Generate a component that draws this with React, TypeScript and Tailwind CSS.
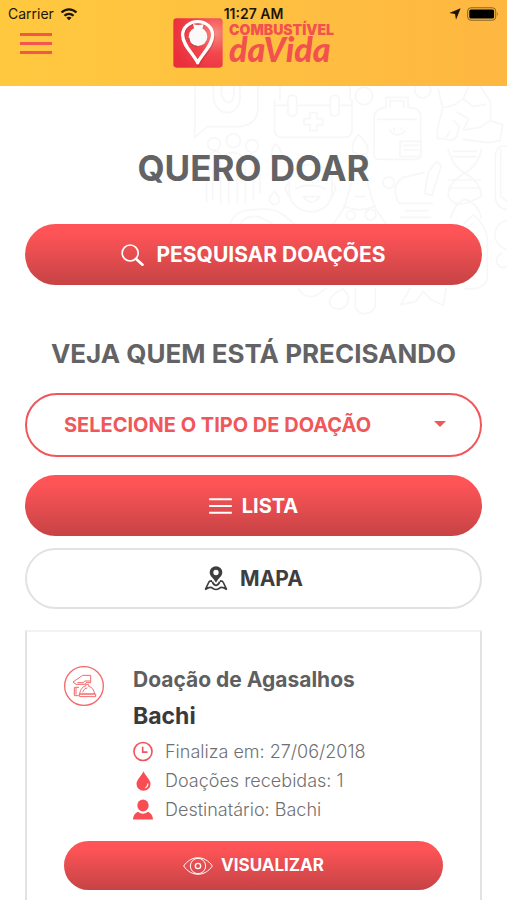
// App.tsx
import type { ReactNode } from 'react';

// ─── Dados ──────
const DONATION_TYPES = ['Agasalhos', 'Alimentos', 'Sangue'];

const DONATION = {
  title: 'Doação de Agasalhos',
  name: 'Bachi',
  endsOn: '27/06/2018',
  received: 1,
  recipient: 'Bachi',
};

// ─── Ícones ──────
const WifiIcon = () => (
  <svg viewBox="0 0 54 40" className="w-[18px] h-[13px]" aria-hidden="true">
    <g fill="none" stroke="#1c1608" strokeWidth="7">
      <path d="M4 14C17 1 37 1 50 14" />
      <path d="M13 24C21 16 33 16 41 24" />
    </g>
    <path d="M19 30C24 26 30 26 35 30L27 38Z" fill="#1c1608" />
  </svg>
);

const LocationIcon = () => (
  <svg viewBox="0 0 36 36" className="w-3 h-3" aria-hidden="true">
    <path d="M35 1L21 35L18 18L1 15Z" fill="#1c1608" />
  </svg>
);

const BatteryIcon = () => (
  <svg viewBox="0 0 98 42" className="w-8 h-[14px]" aria-hidden="true">
    <rect x="2" y="2" width="86" height="38" rx="10" fill="none" stroke="#7d6129" strokeWidth="3" />
    <rect x="7" y="7" width="76" height="28" rx="5" fill="#000" />
    <path d="M92 15Q97 21 92 27Z" fill="#7d6129" />
  </svg>
);

const LogoMark = () => (
  <svg viewBox="0 0 150 150" className="w-[50px] h-[50px]" aria-hidden="true">
    <defs>
      <radialGradient id="mark" cx="0.85" cy="0.3" r="0.9">
        <stop offset="0" stopColor="#f98a80" />
        <stop offset="0.45" stopColor="#f2474d" />
        <stop offset="1" stopColor="#ea2f3c" />
      </radialGradient>
    </defs>
    <rect x="1" y="1" width="148" height="148" rx="10" fill="url(#mark)" />
    <path d="M76 140C62 110 31 84 31 54A45 41 0 0 1 121 54C121 84 90 110 76 140Z" fill="none" stroke="#a92731" strokeWidth="10" opacity="0.4" />
    <path d="M74 134C60 106 29 82 29 51A45 40 0 0 1 119 51C119 82 88 106 74 134Z" fill="none" stroke="#fff" strokeWidth="10" strokeLinejoin="round" />
    <path d="M60 18C72 22 80 22 92 18L88 34H64Z" fill="#fff" />
    <circle cx="75" cy="56" r="28" fill="#fafafa" />
    <path d="M48 60C48 74 58 84 72 86" fill="none" stroke="#8f5155" strokeWidth="3" strokeDasharray="12 4" />
  </svg>
);

const SearchIcon = () => (
  <svg viewBox="0 0 68 66" className="w-[23px] h-[22px]" fill="none" stroke="#fff" aria-hidden="true">
    <circle cx="27" cy="27" r="24" strokeWidth="5" />
    <path d="M45 45L64 62" strokeWidth="8" strokeLinecap="round" />
  </svg>
);

const ListIcon = () => (
  <svg viewBox="0 0 68 48" className="w-[23px] h-4" stroke="#fff" strokeWidth="6" aria-hidden="true">
    <path d="M0 4H68M0 24H68M0 44H68" />
  </svg>
);

const MapPinIcon = () => (
  <svg viewBox="0 0 72 74" className="w-6 h-[25px]" aria-hidden="true">
    <path fillRule="evenodd" d="M36 50C31 37 17 31 17 18A19 18 0 0 1 55 18C55 31 41 37 36 50ZM36 11A8 8 0 1 0 36 27A8 8 0 1 0 36 11Z" fill="#3e3e40" />
    <path
      d="M24 44C18 44 15 46 14 49L4 70C12 64 22 62 27 67Q36 73 45 67C50 62 60 64 68 70L58 49C57 46 54 44 48 44M25 46Q27 56 36 58Q45 56 47 46"
      fill="none"
      stroke="#3e3e40"
      strokeWidth="5"
    />
  </svg>
);

const ClothesIcon = () => (
  <svg viewBox="0 0 120 120" className="w-10 h-10" fill="none" stroke="#f4686b" aria-hidden="true">
    <circle cx="60" cy="60" r="58" strokeWidth="4" />
    <g strokeWidth="3">
      <path d="M80 28H56L27 48L36 55H62L66 50H80ZM40 50H58L62 45H78" />
      <path d="M45 64H31V89H44M36 66V86" />
      <path d="M47 84C49 68 58 61 64 61V56H74V61C84 63 90 72 92 84ZM45 84H95V92H47ZM56 79C60 69 64 66 70 66" />
    </g>
  </svg>
);

const ClockIcon = () => (
  <svg viewBox="0 0 62 62" className="w-[21px] h-[21px]" fill="none" stroke="#f0545a" aria-hidden="true">
    <circle cx="31" cy="31" r="28" strokeWidth="5" />
    <path d="M30 16V33H45" strokeWidth="5" />
  </svg>
);

const DropIcon = () => (
  <svg viewBox="0 0 44 60" className="w-[15px] h-5" aria-hidden="true">
    <path d="M22 1C26 13 43 26 43 39A21 20 0 0 1 1 39C1 26 18 13 22 1Z" fill="#f94d54" />
    <path d="M37 38C37 46 32 51 25 52C30 48 33 44 34 37Z" fill="#fff" />
  </svg>
);

const PersonIcon = () => (
  <svg viewBox="0 0 60 62" className="w-5 h-[21px]" fill="#f94d54" aria-hidden="true">
    <ellipse cx="30" cy="19" rx="17" ry="18" />
    <path d="M0 61C1 47 8 42 15 38Q30 50 45 38C52 42 59 47 60 61Z" />
  </svg>
);

const EyeIcon = () => (
  <svg viewBox="0 0 90 54" className="w-[30px] h-[18px]" fill="none" stroke="#fff" strokeWidth="3" aria-hidden="true">
    <path d="M2 27C24-6 66-6 88 27C66 60 24 60 2 27Z" />
    <circle cx="45" cy="27" r="23" />
    <circle cx="45" cy="27" r="8" strokeWidth="4" />
  </svg>
);

// Desenhos claros no fundo do topo
const Pattern = () => (
  <svg
    viewBox="0 18 981 708"
    className="absolute top-0 right-0 w-[327px] h-[236px]"
    fill="none"
    stroke="#f7f7f7"
    strokeWidth="5"
    strokeLinecap="round"
    strokeLinejoin="round"
    aria-hidden="true"
  >
    <path d="M46 18L44 172L82 140H180Q234 134 234 80V18M100 18V50Q106 98 144 98Q182 92 180 46V18M125 18Q118 62 148 68Q166 62 162 18" />
    <path d="M284 60V150Q284 172 306 172H494Q516 172 516 150V60M284 76H322M350 76H450M478 76H516M300 60V18M510 60V18" />
    <rect x="324" y="46" width="26" height="62" rx="11" />
    <rect x="451" y="46" width="26" height="62" rx="11" />
    <path d="M390 98H410V116H428V134H410V152H390V134H372V116H390Z" />
    <circle cx="552" cy="48" r="26" />
    <circle cx="728" cy="30" r="24" />
    <path d="M618 82V52H684V82Q722 82 722 112V222Q722 238 706 238H596Q582 238 582 222V112Q582 86 618 82ZM630 82V62H672V82M594 118H710M660 184H724V230H660ZM670 196H714M670 210H714M628 150Q650 178 676 152M642 144V150M664 144V150" />
    <path d="M774 24L788 84L772 150V176H796L810 154M796 176Q814 188 830 170L838 140L820 120M788 84L824 74L850 56L880 80L916 74M830 96L866 116L850 150L900 142L930 122L968 134L960 182L922 188L850 178M900 18L932 66V122M850 56L866 18" />
    <circle cx="102" cy="192" r="19" /><circle cx="160" cy="182" r="21" /><circle cx="216" cy="198" r="19" />
    <path d="M80 300V366M98 270V356M122 248V370M146 248V370M172 248V370M196 264V370M220 254V356M240 280V340M84 228Q110 200 126 230Q158 204 190 232Q218 210 236 240" />
    <path d="M286 192Q312 214 304 234Q286 248 274 230Q272 210 286 192ZM536 164Q570 196 562 218Q540 234 518 214Q512 190 536 164ZM284 334Q304 358 294 370Q278 380 268 362Q268 348 284 334Z" />
    <path d="M328 280Q390 226 456 280V340Q450 390 392 396Q336 390 328 340ZM346 326Q386 306 436 326M370 350Q394 382 420 350ZM328 308Q306 320 328 350M456 308Q476 320 456 350" />
    <path d="M150 432Q166 388 216 390Q276 380 306 402L344 432M182 430Q198 404 236 410L276 430M460 432L492 384L520 290Q536 258 558 294L584 382L618 432M490 378Q538 400 586 378M526 350H554" />
    <circle cx="512" cy="406" r="13" /><circle cx="572" cy="404" r="16" /><circle cx="626" cy="308" r="17" />
    <path d="M656 368Q630 316 670 292L732 278M744 278L770 244L784 256L756 346L734 340L744 278M656 370H758M676 392H744M662 412H752" />
    <path d="M804 208Q818 260 854 280Q902 306 904 348M904 208Q898 252 854 280Q806 306 804 348M820 214H890M818 230H888M806 300H902M806 324H902M804 348Q826 396 904 348M812 412Q832 360 856 358Q890 366 904 412" />
    <path d="M981 198H966Q946 204 946 230V352Q950 386 981 388M962 208V350L981 364M852 430L880 404Q922 440 922 480V594Q914 632 852 626M852 448L880 430M981 420Q946 430 944 470Q952 498 981 510M966 520Q944 530 952 552Q964 568 981 558" />
    <path d="M356 626Q372 656 404 648L438 626M490 626Q450 642 448 668Q456 690 484 686Q510 674 504 646L490 626M526 626V682Q536 704 560 700Q588 696 586 668V626M690 626L662 674L708 664L730 634L754 660L790 676L798 626" />
  </svg>
);

// ─── Componentes ──────
interface PillButtonProps {
  icon: ReactNode;
  children: ReactNode;
  className: string;
}

const RED_PILL = 'bg-linear-to-b from-[#fe5457] from-15% to-[#c64345] text-white';

const PillButton = ({ icon, children, className }: PillButtonProps) => (
  <button type="button" className={`w-full flex items-center justify-center rounded-full ${className}`}>
    {icon}
    {children}
  </button>
);

const InfoRow = ({ icon, children }: { icon: ReactNode; children: ReactNode }) => (
  <li className="flex items-center gap-3">
    <span className="w-5 flex justify-center shrink-0">{icon}</span>
    <span>{children}</span>
  </li>
);

const Header = () => (
  <header className="relative shrink-0 h-[86px] bg-linear-to-r from-[#ffc93f] to-[#feb741]">
    <div className="absolute inset-x-0 top-0 h-7 pl-2 pr-2 grid grid-cols-3 items-center text-sm text-[#1c1608]">
      <span className="flex items-center gap-1.5">Carrier <WifiIcon /></span>
      <span className="text-center font-semibold">11:27 AM</span>
      <span className="flex items-center justify-end gap-1.5"><LocationIcon /><BatteryIcon /></span>
    </div>
    <div className="h-full px-5 grid grid-cols-[1fr_auto_1fr] items-center">
      <button type="button" aria-label="Menu" className="w-8 flex flex-col gap-1.5">
        <span className="h-[3px] bg-[#f2564e]" />
        <span className="h-[3px] bg-[#f2564e]" />
        <span className="h-[3px] bg-[#f2564e]" />
      </button>
      <a href="#" className="flex items-center gap-1.5 text-[#f2524e]">
        <LogoMark />
        <span className="flex flex-col">
          <span className="text-sm leading-3 font-black">COMBUSTÍVEL</span>
          <span className="text-[34px] leading-[26px] font-black italic font-['Lato',sans-serif]">daVida</span>
        </span>
      </a>
    </div>
  </header>
);

const DonationCard = () => (
  <article className="mt-[21px] flex-1 border-x-2 border-t-2 border-x-[#e2e2e2] border-t-[#f2f2f2] px-[37px] pt-[34px] pb-[10px]">
    <div className="flex gap-[29px]">
      <div className="shrink-0"><ClothesIcon /></div>
      <div>
        <h3 className="text-[21px] leading-7 font-bold text-[#5f5f61]">{DONATION.title}</h3>
        <p className="mt-2 text-[23px] leading-7 font-bold text-[#3a3a3c]">{DONATION.name}</p>
        <ul className="mt-[7px] text-lg leading-[29px] font-light text-[#707072]">
          <InfoRow icon={<ClockIcon />}>Finaliza em: {DONATION.endsOn}</InfoRow>
          <InfoRow icon={<DropIcon />}>Doações recebidas: {DONATION.received}</InfoRow>
          <InfoRow icon={<PersonIcon />}>Destinatário: {DONATION.recipient}</InfoRow>
        </ul>
      </div>
    </div>
    <PillButton icon={<EyeIcon />} className={`mt-[17px] h-[49px] gap-2 text-[17px] font-bold ${RED_PILL}`}>
      VISUALIZAR
    </PillButton>
  </article>
);

export default function App() {
  return (
    <div className="min-h-screen flex flex-col bg-white font-['Inter',sans-serif]">
      <Header />
      <main className="relative flex-1 flex flex-col px-[25px] pt-[62px]">
        <Pattern />
        <div className="relative flex-1 flex flex-col">
          <h1 className="text-center text-[35px] leading-10 font-bold text-[#636365]">QUERO DOAR</h1>
          <PillButton icon={<SearchIcon />} className={`mt-9 h-[61px] gap-3 text-[21px] font-bold ${RED_PILL}`}>
            PESQUISAR DOAÇÕES
          </PillButton>

          <h2 className="mt-[53px] text-center text-[26px] leading-8 font-bold text-[#636365]">VEJA QUEM ESTÁ PRECISANDO</h2>
          <div className="relative mt-[23px]">
            <select
              aria-label="Tipo de doação"
              className="w-full h-16 appearance-none rounded-full border-2 border-[#f0575a] bg-white pl-[37px] pr-16 text-xl font-bold text-[#f0575a]"
            >
              <option>SELECIONE O TIPO DE DOAÇÃO</option>
              {DONATION_TYPES.map((type) => <option key={type}>{type}</option>)}
            </select>
            <svg viewBox="0 0 12 6" className="pointer-events-none absolute right-9 top-7 w-3 h-1.5" fill="#f0575a" aria-hidden="true">
              <path d="M0 0H12L6 6Z" />
            </svg>
          </div>
          <PillButton icon={<ListIcon />} className={`mt-[18px] h-[61px] gap-2.5 text-xl font-bold ${RED_PILL}`}>
            LISTA
          </PillButton>
          <PillButton icon={<MapPinIcon />} className="mt-3 h-[61px] gap-3 border-2 border-[#e2e2e2] bg-white text-[21px] font-bold text-[#3e3e40]">
            MAPA
          </PillButton>

          <DonationCard />
        </div>
      </main>
    </div>
  );
}
